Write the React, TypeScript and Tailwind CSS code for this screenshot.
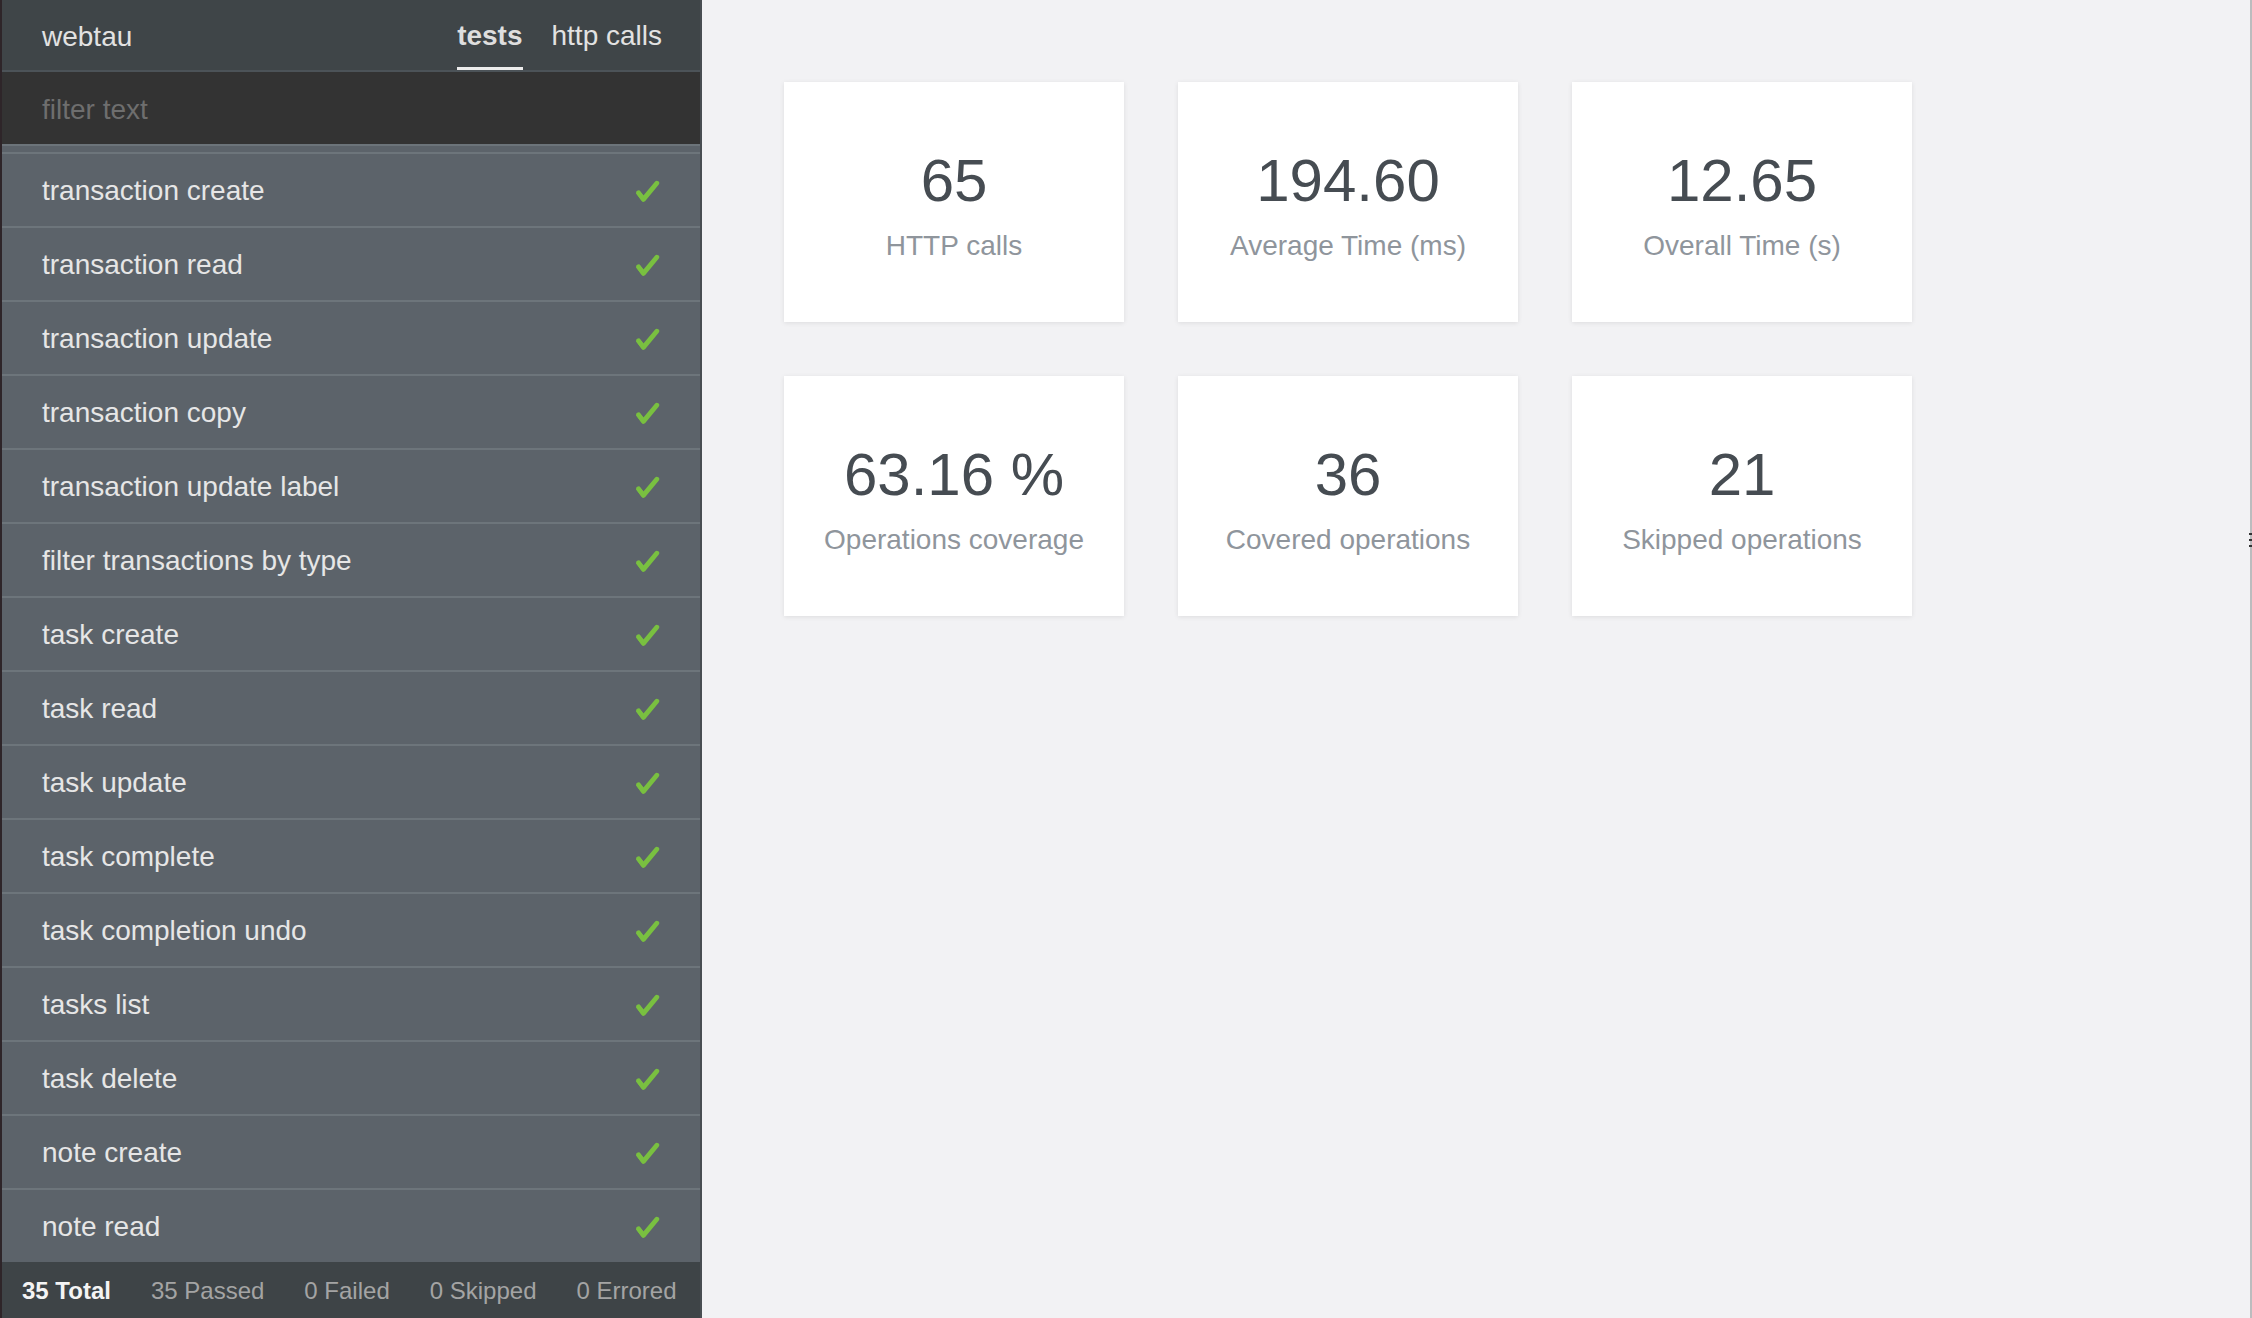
import React from "react";

const tests = [
  "transaction create",
  "transaction read",
  "transaction update",
  "transaction copy",
  "transaction update label",
  "filter transactions by type",
  "task create",
  "task read",
  "task update",
  "task complete",
  "task completion undo",
  "tasks list",
  "task delete",
  "note create",
  "note read",
];

const cards = [
  { value: "65", label: "HTTP calls" },
  { value: "194.60", label: "Average Time (ms)" },
  { value: "12.65", label: "Overall Time (s)" },
  { value: "63.16 %", label: "Operations coverage" },
  { value: "36", label: "Covered operations" },
  { value: "21", label: "Skipped operations" },
];

function Check() {
  return (
    <svg width="25" height="23" viewBox="0 0 25 23" aria-hidden="true">
      <path
        d="M3.6 12.8 L8.4 19.4 L21.8 3.2"
        fill="none"
        stroke="#79c040"
        strokeWidth="4.8"
        strokeLinecap="round"
        strokeLinejoin="round"
      />
      <path d="M3 11.2 C5.4 11.4 7.6 14.6 9.8 17.4 L7.8 21.8 C5.8 19.8 3.6 16.4 1.2 13.6 Z" fill="#79c040" />
    </svg>
  );
}

export default function App() {
  return (
    <div
      className="relative flex h-[1318px] w-[2252px] overflow-hidden bg-[#f2f2f4]"
      style={{ fontFamily: '"Liberation Sans", Arial, Helvetica, sans-serif' }}
    >
      <aside className="flex h-full w-[702px] shrink-0 flex-col border-l-2 border-r-2 border-l-[#2e2529] border-r-[#494e52] bg-[#5c636a]">
        <header className="flex h-[72px] shrink-0 items-stretch justify-between border-b-2 border-[#4c5358] bg-[#3f4548] pl-[40px] pr-[38px]">
          <div className="flex items-center pt-[4px] text-[28px] text-[#e2e2e2]">webtau</div>
          <nav className="flex items-stretch gap-[29px] text-[28px]">
            <div className="flex items-center border-b-[3px] border-[#ececec] pt-[4px] font-bold text-[#dedede]">
              tests
            </div>
            <div className="flex items-center border-b-[3px] border-transparent pt-[5px] text-[#e2e2e2]">
              http calls
            </div>
          </nav>
        </header>
        <div className="flex h-[72px] shrink-0 items-center bg-[#333333] pl-[40px] pt-[4px]">
          <input
            className="w-full bg-transparent text-[28px] text-[#e0e0e0] outline-none placeholder:text-[#6e6e6e]"
            placeholder="filter text"
          />
        </div>
        <div className="flex-1 overflow-hidden border-t-2 border-[#6c747a] pt-[6px]">
          {tests.map((t) => (
            <div
              key={t}
              className="flex h-[74px] items-center justify-between border-t-2 border-[#6d757b] pl-[40px] pr-[40px] pt-[2px] text-[28px] text-[#e6e6e6]"
            >
              <span>{t}</span>
              <Check />
            </div>
          ))}
        </div>
        <footer className="flex h-[56px] shrink-0 items-center gap-[40px] bg-[#3e4447] pl-[20px] pt-[1px] text-[24px] text-[#a4a4a4]">
          <span className="font-bold text-[#f4f4f4]">35 Total</span>
          <span>35 Passed</span>
          <span>0 Failed</span>
          <span>0 Skipped</span>
          <span>0 Errored</span>
        </footer>
      </aside>
      <main className="flex-1 border-r-2 border-[#bcbcbe] pl-[82px] pt-[82px]">
        <div className="grid grid-cols-[340px_340px_340px] gap-[54px]">
          {cards.map((c) => (
            <div
              key={c.label}
              className="flex h-[240px] flex-col items-center justify-center bg-white pt-[6px] shadow-[0_1px_5px_rgba(0,0,0,0.09)]"
            >
              <div className="text-[60px] leading-[72px] text-[#464c52]">{c.value}</div>
              <div className="mt-[9px] text-[28px] leading-[40px] text-[#8f959c]">{c.label}</div>
            </div>
          ))}
        </div>
      </main>
      <div className="absolute right-0 top-[533px] flex w-[3px] flex-col gap-[4px]">
        <div className="h-[2px] bg-[#333]" />
        <div className="h-[2px] bg-[#333]" />
        <div className="h-[2px] bg-[#333]" />
      </div>
    </div>
  );
}
